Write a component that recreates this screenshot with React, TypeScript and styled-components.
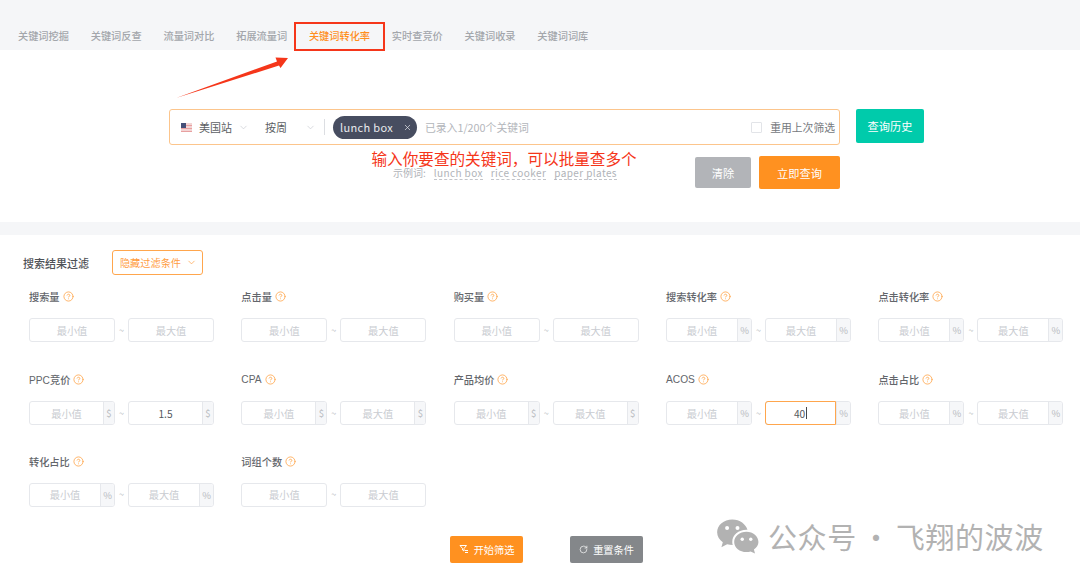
import React from "react";
import styled, { createGlobalStyle } from "styled-components";
import { ChevronDown, CircleHelp, RotateCw, X } from "lucide-react";

const GlobalStyle = createGlobalStyle`
  html, body { margin: 0; padding: 0; background: #fff; }
  body { font-family: "Noto Sans CJK SC", "Noto Sans", sans-serif; }
  * { box-sizing: border-box; }
`;

const Page = styled.div`
  position: relative;
  width: 1080px;
  height: 581px;
  overflow: hidden;
  background: #fff;
`;

const TabBar = styled.nav`
  display: flex;
  align-items: flex-start;
  gap: 21.8px;
  height: 50px;
  padding: 28px 0 0 18px;
  background: #f5f6f8;
`;

const Tab = styled.div<{ $active?: boolean }>`
  position: relative;
  font-size: 10.2px;
  line-height: 15px;
  font-weight: 500;
  white-space: nowrap;
  color: ${(p) => (p.$active ? "#ff8f1f" : "#a3a6ab")};
`;

const TabMark = styled.span`
  position: absolute;
  left: -15px;
  top: -6px;
  width: 91px;
  height: 29px;
  border: 2px solid #f5361a;
  background: transparent;
`;

const Arrow = styled.svg`
  position: absolute;
  left: 140px;
  top: 50px;
`;

const SearchSection = styled.section`
  height: 172px;
  padding: 59px 0 0 169px;
`;

const SearchRow = styled.div`
  display: flex;
  align-items: flex-start;
  gap: 16px;
`;

const SearchBar = styled.div`
  display: flex;
  align-items: center;
  width: 671px;
  height: 36px;
  padding: 0 4px 0 11px;
  border: 1px solid #fcc58c;
  border-radius: 3px;
  font-size: 11px;
  color: #63666b;
`;

const Flag = styled.svg`
  margin-right: 7px;
`;

const Select = styled.div<{ $width: number; $offset?: number }>`
  display: flex;
  align-items: center;
  justify-content: space-between;
  width: ${(p) => p.$width}px;
  margin-left: ${(p) => p.$offset || 0}px;
  color: #5c5f64;
  svg { color: #c8cad0; }
`;

const Divider = styled.span`
  width: 1px;
  height: 16px;
  margin: 0 8px;
  background: #dcdee2;
`;

const KeywordTag = styled.div`
  display: flex;
  align-items: center;
  justify-content: space-between;
  width: 84px;
  height: 23px;
  padding: 0 5px 0 7px;
  border-radius: 12px;
  background: #474d60;
  color: #e8eaee;
  font-size: 11px;
  letter-spacing: 0.35px;
`;

const KeywordHint = styled.span`
  margin-left: 8px;
  font-size: 10.8px;
  color: #b3b6bb;
`;

const ReuseCheck = styled.label`
  display: flex;
  align-items: center;
  gap: 8px;
  margin-left: auto;
  font-size: 10.8px;
  color: #75787d;
`;

const CheckBox = styled.span`
  width: 11px;
  height: 11px;
  border: 1px solid #e2e4e8;
  border-radius: 1px;
`;

const Button = styled.button<{ $bg: string; $width: number; $height: number; $small?: boolean }>`
  display: inline-flex;
  align-items: center;
  justify-content: center;
  gap: ${(p) => (p.$small ? "5px" : "4px")};
  width: ${(p) => p.$width}px;
  height: ${(p) => p.$height}px;
  padding: 0;
  border: 0;
  border-radius: 2px;
  background: ${(p) => p.$bg};
  color: #fff;
  font-family: inherit;
  font-size: ${(p) => (p.$small ? "10.2px" : "11.2px")};
`;

const LowerRow = styled.div`
  display: flex;
  align-items: flex-start;
  width: 671px;
  margin-top: 11px;
`;

const HelpColumn = styled.div`
  display: flex;
  flex-direction: column;
`;

const Annotation = styled.div`
  margin: -6px 0 0 202.5px;
  font-size: 15.6px;
  line-height: 16px;
  color: #f5361a;
  white-space: nowrap;
`;

const Examples = styled.div`
  display: flex;
  gap: 8px;
  margin: 1px 0 0 224px;
  font-size: 10px;
  line-height: 12px;
  color: #b0b3b8;
  white-space: nowrap;
`;

const ExampleWord = styled.span`
  border-bottom: 1px dashed #c3c5ca;
  letter-spacing: 0.4px;
`;

const ActionGroup = styled.div`
  display: flex;
  align-items: center;
  gap: 8px;
  margin-left: auto;
`;

const Band = styled.div`
  height: 13px;
  background: #f5f6f8;
`;

const FilterSection = styled.section`
  padding: 15px 0 0 23px;
`;

const FilterHead = styled.div`
  display: flex;
  align-items: center;
  gap: 23px;
  height: 25px;
`;

const FilterTitle = styled.h3`
  margin: 0;
  font-size: 11px;
  font-weight: 500;
  color: #4f5257;
`;

const HideButton = styled.button`
  display: inline-flex;
  align-items: center;
  justify-content: center;
  gap: 5px;
  width: 91px;
  height: 25px;
  padding: 0 0 0 2px;
  border: 1px solid #ffa64d;
  border-radius: 3px;
  background: #fff;
  color: #ff9d3f;
  font-family: inherit;
  font-size: 10.2px;
`;

const FilterGrid = styled.div`
  display: grid;
  grid-template-columns: repeat(5, 185px);
  grid-template-rows: 83px 81.6px 82.3px;
  column-gap: 27.35px;
  margin: 14px 0 0 6px;
`;

const FieldLabel = styled.div`
  display: flex;
  align-items: center;
  gap: 3px;
  height: 15px;
  font-family: "Liberation Sans", "Noto Sans CJK SC", sans-serif;
  font-size: 10.2px;
  font-weight: 500;
  color: #63666b;
  svg { color: #ffa64d; }
`;

const RangeRow = styled.div`
  display: flex;
  align-items: center;
  justify-content: space-between;
  width: 185px;
  margin-top: 14px;
`;

const Tilde = styled.span`
  font-size: 9px;
  color: #b5b8bd;
`;

const InputBox = styled.div`
  display: flex;
  width: 86px;
  height: 24px;
  border: 1px solid #e6e8ec;
  border-radius: 3px;
`;

const InputValue = styled.div<{ $filled?: boolean; $focused?: boolean }>`
  flex: 1;
  display: flex;
  align-items: center;
  justify-content: center;
  margin: ${(p) => (p.$focused ? "-1px 0 -1px -1px" : "0")};
  border: ${(p) => (p.$focused ? "1px solid #ffa64d" : "0")};
  border-radius: ${(p) => (p.$focused ? "3px 0 0 3px" : "0")};
  font-size: 10.2px;
  color: ${(p) => (p.$filled ? "#55585d" : "#c9ccd1")};
`;

const Caret = styled.span`
  width: 1px;
  height: 12px;
  margin-left: 1px;
  background: #44474c;
`;

const Suffix = styled.span<{ $narrow?: boolean }>`
  display: flex;
  align-items: center;
  justify-content: center;
  width: ${(p) => (p.$narrow ? "11px" : "14px")};
  border-left: 1px solid #e6e8ec;
  border-radius: 0 2px 2px 0;
  background: #f6f7f9;
  font-size: 9.5px;
  color: #b9bcc1;
`;

const FilterActions = styled.div`
  display: flex;
  gap: 47px;
  margin: 0 0 0 427px;
`;

const Watermark = styled.div`
  position: absolute;
  left: 716px;
  top: 517px;
  display: flex;
  align-items: center;
  font-size: 29px;
  line-height: 38px;
  letter-spacing: 0.6px;
  color: #b2b2b2;
  white-space: nowrap;
`;

const WatermarkIcon = styled.svg`
  margin-right: 9px;
`;

const WatermarkDot = styled.span`
  width: 39px;
  text-align: center;
`;

type FieldDef = { label: string; unit?: string; min?: string; max?: string; focused?: boolean };

const fields: FieldDef[] = [
  { label: "搜索量" },
  { label: "点击量" },
  { label: "购买量" },
  { label: "搜索转化率", unit: "%" },
  { label: "点击转化率", unit: "%" },
  { label: "PPC竞价", unit: "$", max: "1.5" },
  { label: "CPA", unit: "$" },
  { label: "产品均价", unit: "$" },
  { label: "ACOS", unit: "%", max: "40", focused: true },
  { label: "点击占比", unit: "%" },
  { label: "转化占比", unit: "%" },
  { label: "词组个数" },
];

const tabs = ["关键词挖掘", "关键词反查", "流量词对比", "拓展流量词", "关键词转化率", "实时查竞价", "关键词收录", "关键词词库"];

const RangeInput = ({ hint, value, unit, focused }: { hint: string; value?: string; unit?: string; focused?: boolean }) => (
  <InputBox>
    <InputValue $filled={!!value} $focused={focused}>
      {value || hint}
      {focused && <Caret />}
    </InputValue>
    {unit && <Suffix $narrow={unit === "$"}>{unit}</Suffix>}
  </InputBox>
);

const App = () => {
  return (
    <Page>
      <GlobalStyle />
      <TabBar>
        {tabs.map((t, i) => (
          <Tab key={t} $active={i === 4}>
            {t}
            {i === 4 && <TabMark />}
          </Tab>
        ))}
      </TabBar>
      <Arrow width="152" height="50" viewBox="0 0 152 50">
        <path d="M36 48 L137 11.5 L135.5 7.5 L148 8 L140.5 18 L139 15.5 Z" fill="#f5361a" />
      </Arrow>

      <SearchSection>
        <SearchRow>
          <SearchBar>
            <Flag width="11" height="9" viewBox="0 0 11 9">
              <rect width="11" height="9" fill="#f3d5d5" />
              <rect y="2" width="11" height="1" fill="#e8a0a0" />
              <rect y="5" width="11" height="1" fill="#e8a0a0" />
              <rect y="8" width="11" height="1" fill="#e8a0a0" />
              <rect width="5" height="5" fill="#444f78" />
            </Flag>
            <Select $width={50}>
              美国站
              <ChevronDown size={11} strokeWidth={1.5} />
            </Select>
            <Select $width={51} $offset={16}>
              按周
              <ChevronDown size={11} strokeWidth={1.5} />
            </Select>
            <Divider />
            <KeywordTag>
              lunch box
              <X size={9} strokeWidth={1.8} />
            </KeywordTag>
            <KeywordHint>已录入1/200个关键词</KeywordHint>
            <ReuseCheck>
              <CheckBox />
              重用上次筛选
            </ReuseCheck>
          </SearchBar>
          <Button $bg="#00cbab" $width={68} $height={34}>
            查询历史
          </Button>
        </SearchRow>
        <LowerRow>
          <HelpColumn>
            <Annotation>输入你要查的关键词，可以批量查多个</Annotation>
            <Examples>
              <span>示例词:</span>
              <ExampleWord>lunch box</ExampleWord>
              <ExampleWord>rice cooker</ExampleWord>
              <ExampleWord>paper plates</ExampleWord>
            </Examples>
          </HelpColumn>
          <ActionGroup>
            <Button $bg="#b2b4b8" $width={56} $height={31}>
              清除
            </Button>
            <Button $bg="#ff9120" $width={81} $height={33}>
              立即查询
            </Button>
          </ActionGroup>
        </LowerRow>
      </SearchSection>

      <Band />

      <FilterSection>
        <FilterHead>
          <FilterTitle>搜索结果过滤</FilterTitle>
          <HideButton>
            隐藏过滤条件
            <ChevronDown size={11} strokeWidth={1.5} />
          </HideButton>
        </FilterHead>
        <FilterGrid>
          {fields.map((f) => (
            <div key={f.label}>
              <FieldLabel>
                {f.label}
                <CircleHelp size={11} strokeWidth={1.8} />
              </FieldLabel>
              <RangeRow>
                <RangeInput hint="最小值" value={f.min} unit={f.unit} />
                <Tilde>~</Tilde>
                <RangeInput hint="最大值" value={f.max} unit={f.unit} focused={f.focused} />
              </RangeRow>
            </div>
          ))}
        </FilterGrid>
        <FilterActions>
          <Button $bg="#ff9120" $width={73} $height={27} $small>
            <svg width="10" height="10" viewBox="0 0 10 10" fill="none" stroke="#fff" strokeWidth="1">
              <path d="M1 1.5 H7.5 L5 4.5 V7 L3.5 6 V4.5 Z" />
              <path d="M6 6.5 H9 M6 8.5 H9" />
            </svg>
            开始筛选
          </Button>
          <Button $bg="#84878a" $width={73} $height={27} $small>
            <RotateCw size={9} strokeWidth={1.8} />
            重置条件
          </Button>
        </FilterActions>
      </FilterSection>

      <Watermark>
        <WatermarkIcon width="43" height="36" viewBox="0 0 45 38">
          <path d="M17 1.5 C8 1.5 1 7.5 1 15 C1 19.5 3.5 23 7 25.5 L5.5 31 L11.5 27.8 C13.5 28.4 15.5 28.6 17.5 28.6 C17 27 17 26 17 25 C17 18 23.5 12.5 32 12.5 L33 12.5 C31.5 6.5 25 1.5 17 1.5 Z" fill="#b2b2b2" />
          <circle cx="11.5" cy="10.5" r="2.1" fill="#fff" />
          <circle cx="22.5" cy="10.5" r="2.1" fill="#fff" />
          <path d="M32 14.5 C24.8 14.5 19 19.3 19 25.3 C19 31.3 24.8 36 32 36 C33.5 36 35 35.8 36.3 35.3 L41 37.5 L39.8 33.2 C42.6 31.2 44.6 28.5 44.6 25.3 C44.6 19.3 39 14.5 32 14.5 Z" fill="#b2b2b2" />
          <circle cx="27.5" cy="22.5" r="1.8" fill="#fff" />
          <circle cx="36.5" cy="22.5" r="1.8" fill="#fff" />
        </WatermarkIcon>
        <span>公众号</span>
        <WatermarkDot>·</WatermarkDot>
        <span>飞翔的波波</span>
      </Watermark>
    </Page>
  );
};

export default App;
